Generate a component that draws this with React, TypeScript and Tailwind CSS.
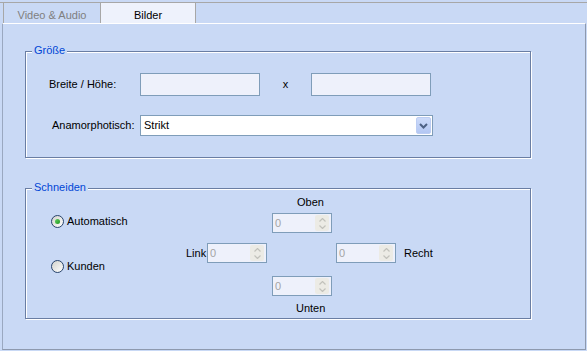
const FONT = "font-['Liberation_Sans',Arial,sans-serif]";

function GroupBox({ title, className, children }: { title: string; className: string; children: React.ReactNode }) {
  return (
    <div
      className={`relative ml-[22px] w-[506px] border border-[#6a7ea3] shadow-[1px_1px_0_#fff,inset_1px_1px_0_#fff] ${className}`}
    >
      <span className="absolute left-[6px] -top-2 px-[2px] bg-[#c9d9f5] text-[#0046d5]">{title}</span>
      {children}
    </div>
  );
}

function Spinner() {
  return (
    <div className="w-[60px] h-[20px] border border-[#7f9db9] bg-[#eef1fb] flex items-center justify-between pl-[2px] pr-[2px] text-[#a5a5a5]">
      <span>0</span>
      <div className="w-[14px] h-[16px] rounded-[2px] bg-[#ecebe5] flex flex-col items-center justify-center gap-[3px]">
        <svg width="7" height="4" viewBox="0 0 7 4">
          <path d="M0.5 3.5 L3.5 0.5 L6.5 3.5" fill="none" stroke="#c2c2bc" strokeWidth="1.2" />
        </svg>
        <svg width="7" height="4" viewBox="0 0 7 4">
          <path d="M0.5 0.5 L3.5 3.5 L6.5 0.5" fill="none" stroke="#c2c2bc" strokeWidth="1.2" />
        </svg>
      </div>
    </div>
  );
}

function Radio({ checked, label, className }: { checked?: boolean; label: string; className: string }) {
  return (
    <div className={`flex items-center h-[13px] ${className}`}>
      <span className="w-[13px] h-[13px] rounded-full border border-[#27436b] bg-gradient-to-br from-[#d2d2cc] to-white flex items-center justify-center">
        {checked && <span className="w-[5px] h-[5px] rounded-full bg-gradient-to-br from-[#5fd25f] to-[#1e961e]" />}
      </span>
      <span className="ml-[3px]">{label}</span>
    </div>
  );
}

export default function App() {
  return (
    <div className={`w-[587px] h-[351px] bg-[#c9d9f5] pt-[2px] overflow-hidden ${FONT} text-[11px] leading-[13px] text-black`}>
      {/* Tabs */}
      <div className="flex h-[21px] border-t border-[#a7a7a7]">
        <div className="ml-[3px] w-[97px] border-l border-[#a7a7a7] flex items-center justify-center pt-[4px] text-[#7f7f7f]">
          Video &amp; Audio
        </div>
        <div className="w-[96px] bg-[#eef2fc] border-x border-[#a7a7a7] flex items-center justify-center pt-[4px]">
          Bilder
        </div>
      </div>

      {/* Panel */}
      <div className="ml-[2px] w-[584px] h-[327px] border-t border-t-white border-l border-l-[#9aa8c0] border-r border-r-[#8d99ae] border-b border-b-[#8d99ae]">
        <GroupBox title="Größe" className="mt-[27px] h-[107px]">
          <div className="flex items-center mt-[21px] pl-[23px] h-[23px]">
            <span className="w-[91px]">Breite / Höhe:</span>
            <div className="w-[120px] h-[23px] border border-[#7f9db9] bg-[#eef1fb]" />
            <span className="w-[51px] text-center">x</span>
            <div className="w-[120px] h-[23px] border border-[#7f9db9] bg-[#eef1fb]" />
          </div>
          <div className="flex items-center mt-[19px] pl-[26px] h-[21px]">
            <span className="w-[88px]">Anamorphotisch:</span>
            <div className="w-[293px] h-[21px] border border-[#7f9db9] bg-white flex items-center justify-between pl-[3px] pr-[1px]">
              <span>Strikt</span>
              <div className="w-[15px] h-[17px] rounded-[2px] border border-[#bccdf3] bg-gradient-to-b from-[#cddbfa] to-[#b3c7f3] flex items-center justify-center">
                <svg width="9" height="6" viewBox="0 0 9 6">
                  <path d="M1 1 L4.5 4.5 L8 1" fill="none" stroke="#4d6185" strokeWidth="2" />
                </svg>
              </div>
            </div>
          </div>
        </GroupBox>

        <GroupBox title="Schneiden" className="mt-[30px] h-[131px] flex">
          <div className="w-[160px] pl-[25px] flex flex-col">
            <Radio checked label="Automatisch" className="mt-[26px]" />
            <Radio label="Kunden" className="mt-[32px]" />
          </div>
          <div className="flex flex-col items-start">
            <span className="mt-[7px] ml-[111px]">Oben</span>
            <div className="mt-[4px] ml-[86px]">
              <Spinner />
            </div>
            <div className="mt-[10px] flex items-center h-[20px]">
              <span className="w-[21px]">Link</span>
              <Spinner />
              <div className="ml-[69px]">
                <Spinner />
              </div>
              <span className="ml-[8px]">Recht</span>
            </div>
            <div className="mt-[13px] ml-[86px]">
              <Spinner />
            </div>
            <span className="mt-[6px] ml-[110px]">Unten</span>
          </div>
        </GroupBox>
      </div>
    </div>
  );
}
